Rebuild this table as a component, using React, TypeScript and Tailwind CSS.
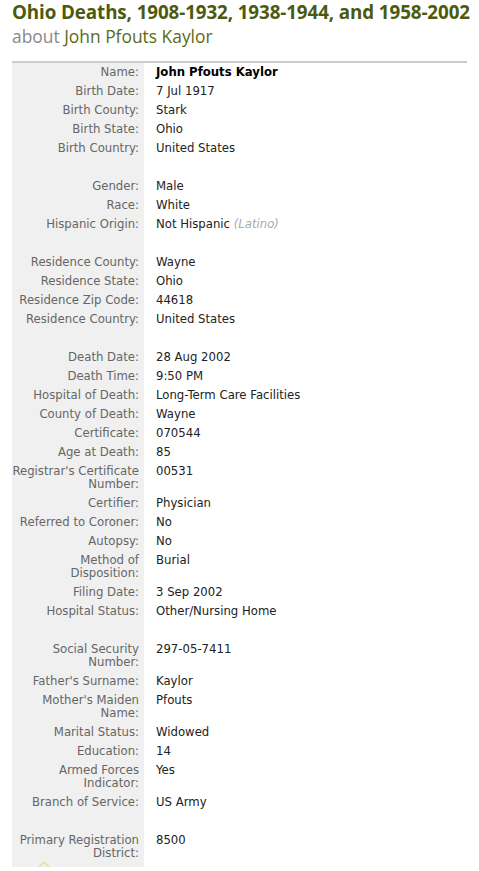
import React from 'react';

type Row = { label: string; value?: React.ReactNode; bold?: boolean } | null;

const rows: Row[] = [
    { label: 'Name:', value: 'John Pfouts Kaylor', bold: true },
    { label: 'Birth Date:', value: '7 Jul 1917' },
    { label: 'Birth County:', value: 'Stark' },
    { label: 'Birth State:', value: 'Ohio' },
    { label: 'Birth Country:', value: 'United States' },
    null,
    { label: 'Gender:', value: 'Male' },
    { label: 'Race:', value: 'White' },
    {
        label: 'Hispanic Origin:',
        value: (
            <>
                Not Hispanic <i className="text-[#aaaaaa]">(Latino)</i>
            </>
        ),
    },
    null,
    { label: 'Residence County:', value: 'Wayne' },
    { label: 'Residence State:', value: 'Ohio' },
    { label: 'Residence Zip Code:', value: '44618' },
    { label: 'Residence Country:', value: 'United States' },
    null,
    { label: 'Death Date:', value: '28 Aug 2002' },
    { label: 'Death Time:', value: '9:50 PM' },
    { label: 'Hospital of Death:', value: 'Long-Term Care Facilities' },
    { label: 'County of Death:', value: 'Wayne' },
    { label: 'Certificate:', value: '070544' },
    { label: 'Age at Death:', value: '85' },
    { label: "Registrar's Certificate\nNumber:", value: '00531' },
    { label: 'Certifier:', value: 'Physician' },
    { label: 'Referred to Coroner:', value: 'No' },
    { label: 'Autopsy:', value: 'No' },
    { label: 'Method of\nDisposition:', value: 'Burial' },
    { label: 'Filing Date:', value: '3 Sep 2002' },
    { label: 'Hospital Status:', value: 'Other/Nursing Home' },
    null,
    { label: 'Social Security\nNumber:', value: '297-05-7411' },
    { label: "Father's Surname:", value: 'Kaylor' },
    { label: "Mother's Maiden\nName:", value: 'Pfouts' },
    { label: 'Marital Status:', value: 'Widowed' },
    { label: 'Education:', value: '14' },
    { label: 'Armed Forces\nIndicator:', value: 'Yes' },
    { label: 'Branch of Service:', value: 'US Army' },
    null,
    { label: 'Primary Registration\nDistrict:', value: '8500' },
];

export default function App() {
    return (
        <div className="bg-white w-[479px] h-[871px] overflow-hidden font-['DejaVu_Sans',sans-serif]">
            {/* Header */}
            <div className="px-[12px]">
                <h1 className="whitespace-nowrap text-[18.8px] leading-[25px] font-bold text-[#4b5a0f] font-['Open_Sans',sans-serif] tracking-[-0.1px]">
                    Ohio Deaths, 1908-1932, 1938-1944, and 1958-2002
                </h1>
                <div className="whitespace-nowrap text-[17.4px] leading-[23px] font-['Open_Sans',sans-serif]">
                    <span className="text-[#888888]">about </span>
                    <span className="text-[#5b6b17]">John Pfouts Kaylor</span>
                </div>
            </div>

            {/* Record table */}
            <div className="relative mt-[13px] mx-[12px] border-t-2 border-[#cccccc] text-[11.7px] leading-[13px]">
                <div className="grid grid-cols-[132px_1fr]">
                    {rows.map((row, i) =>
                        row ? (
                            <React.Fragment key={i}>
                                <div className="bg-[#f0f0f0] text-right text-[#666666] pr-[5px] py-[3px] whitespace-pre">
                                    {row.label}
                                </div>
                                <div className={`pl-[12px] py-[3px] text-[#222222] ${row.bold ? 'font-bold text-black' : ''}`}>
                                    {row.value}
                                </div>
                            </React.Fragment>
                        ) : (
                            <React.Fragment key={i}>
                                <div className="bg-[#f0f0f0] h-[19px]" />
                                <div className="h-[19px]" />
                            </React.Fragment>
                        )
                    )}
                    <div className="bg-[#f0f0f0] h-[4px]" />
                    <div className="h-[4px]" />
                </div>
                <svg className="absolute left-[26px] bottom-[0px]" width="12" height="6" viewBox="0 0 12 6">
                    <path d="M1 6 L6 1 L11 6" fill="none" stroke="#e6d98c" strokeWidth="1.2" />
                </svg>
            </div>
        </div>
    );
}
